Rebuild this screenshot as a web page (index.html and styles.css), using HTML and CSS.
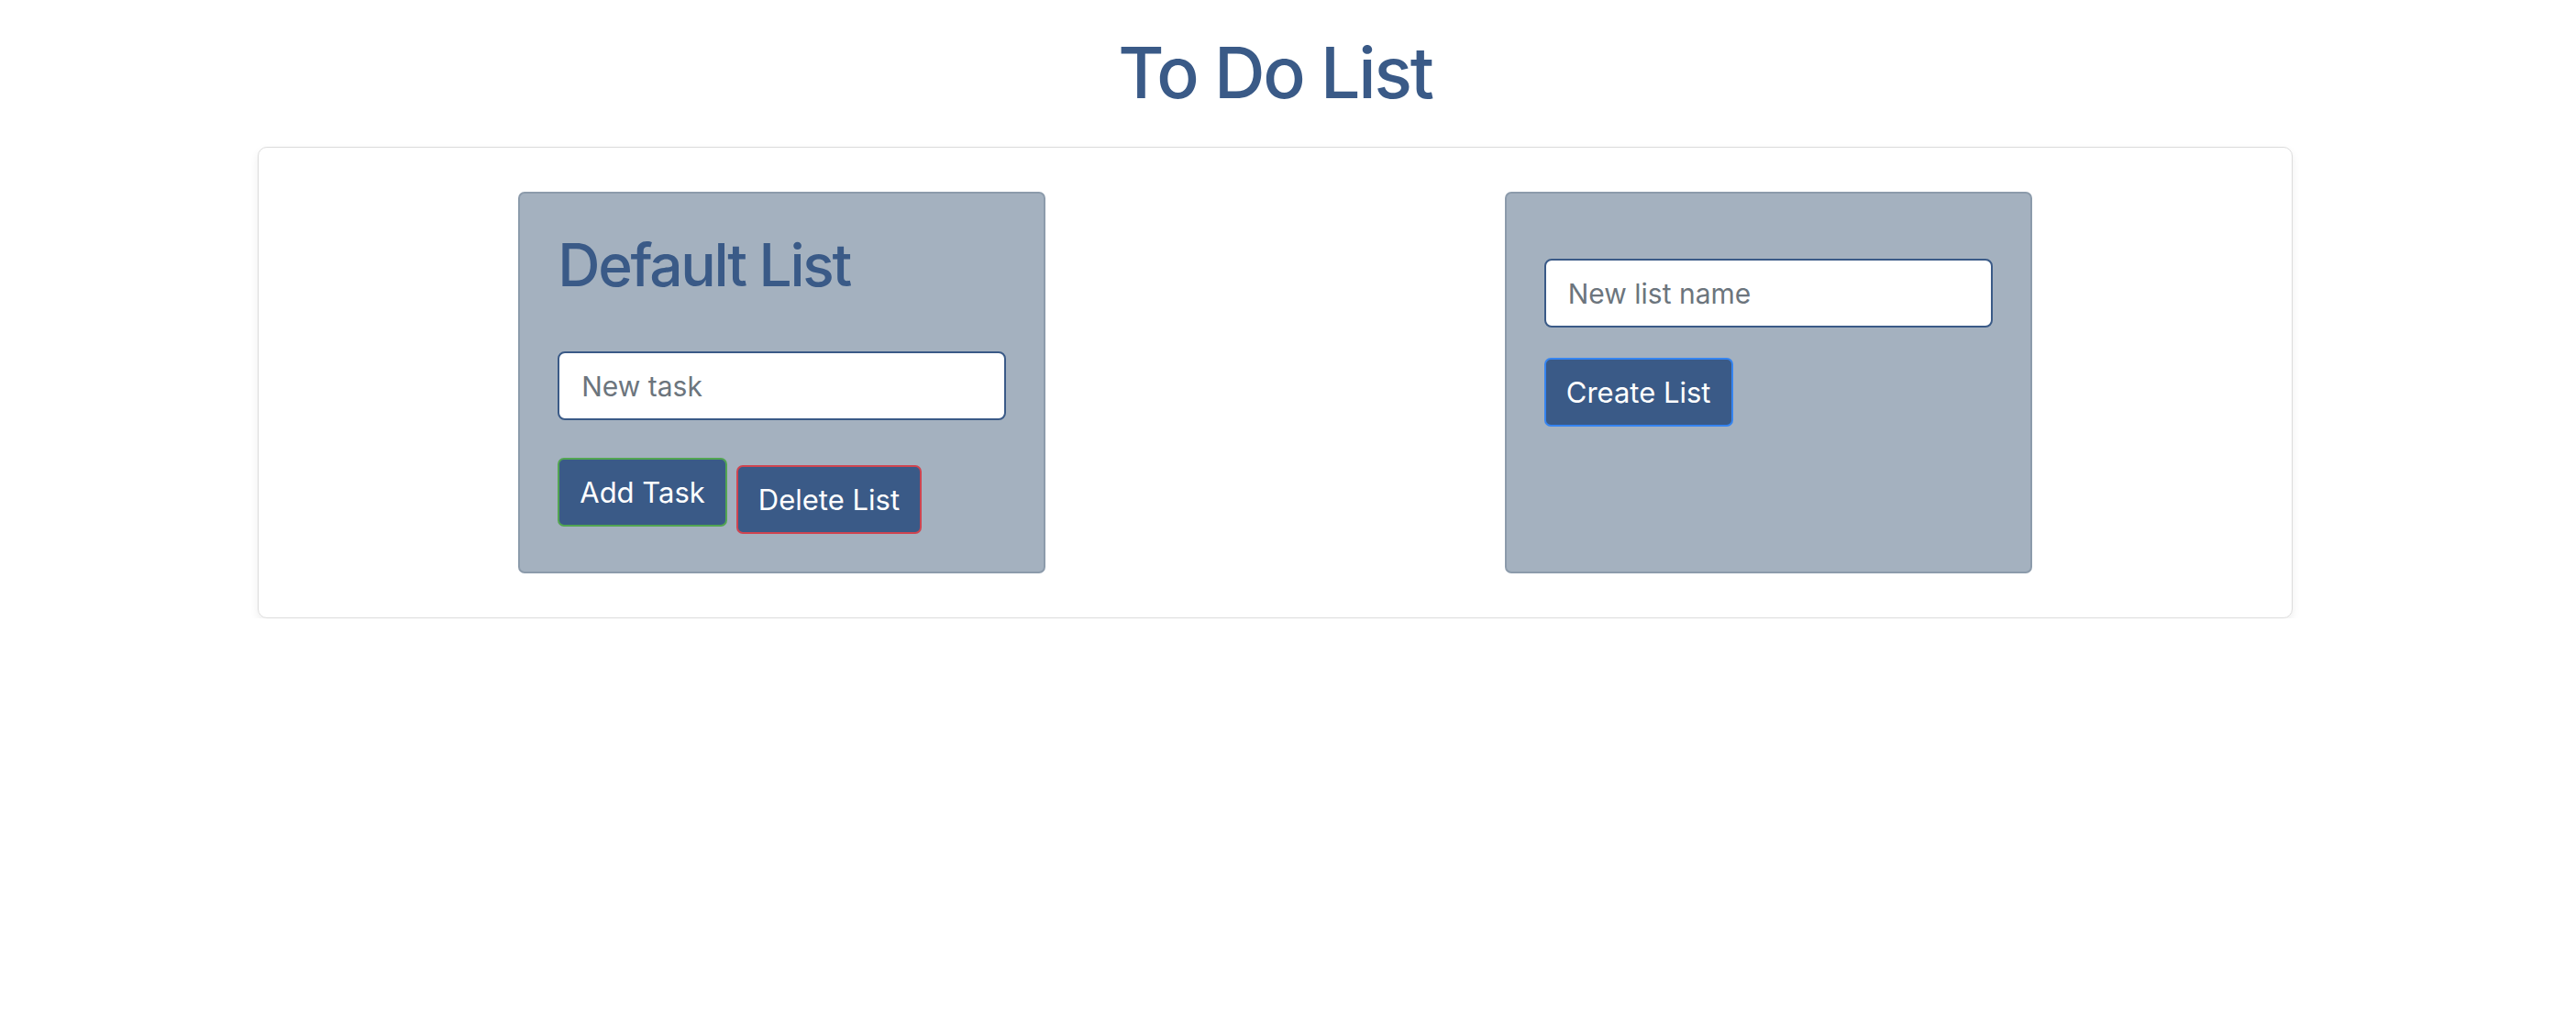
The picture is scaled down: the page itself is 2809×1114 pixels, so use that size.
FILE: index.html
```html
<!DOCTYPE html>
<html lang="en">
<head>
<meta charset="utf-8">
<title>To Do List</title>
<link rel="stylesheet" href="styles.css">
</head>
<body>
<div class="page">
  <h1 class="title">To Do List</h1>
  <div class="board">
    <div class="card">
      <h2 class="card-title">Default List</h2>
      <div class="field"><input class="input" type="text" placeholder="New task"></div>
      <div class="actions">
        <button class="btn btn-add">Add Task</button>
        <button class="btn btn-delete">Delete List</button>
      </div>
    </div>
    <div class="card">
      <div class="field field-new"><input class="input" type="text" placeholder="New list name"></div>
      <div class="actions actions-new">
        <button class="btn btn-create">Create List</button>
      </div>
    </div>
  </div>
</div>
</body>
</html>
```
FILE: styles.css
```css
html, body {
  margin: 0;
  padding: 0;
  background: #ffffff;
}
body {
  font-family: Inter, "Noto Sans", "Liberation Sans", sans-serif;
}
.page {
  width: 2781px;
}
.title {
  margin: 33px 0 35px;
  text-align: center;
  font-size: 77px;
  line-height: 1.2;
  font-weight: 500;
  color: #3a5a87;
  letter-spacing: -2.2px;
}
.board {
  margin: 0 281px;
  border: 1px solid #dcdcdc;
  border-radius: 10px;
  box-shadow: 0 4px 10px rgba(0, 0, 0, 0.07);
  padding: 48px 33px;
  display: flex;
  justify-content: space-around;
  align-items: stretch;
}
.card {
  width: 575px;
  box-sizing: border-box;
  background: #a4b1bf;
  border: 2px solid #8c9bab;
  border-radius: 7px;
  padding: 40px 41px 41px;
  display: flex;
  flex-direction: column;
}
.card-title {
  margin: 0 0 24px;
  font-size: 64px;
  line-height: 1.2;
  font-weight: 500;
  color: #3a5a87;
  letter-spacing: -2.3px;
}
.field {
  margin-top: 31px;
}
.input {
  display: block;
  box-sizing: border-box;
  width: 100%;
  height: 75px;
  margin: 0;
  padding: 0 24px;
  border: 2px solid #3a5a87;
  border-radius: 8px;
  background: #ffffff;
  font-family: inherit;
  font-size: 30px;
  color: #212529;
  outline: none;
}
.input::placeholder {
  color: #6c757d;
  opacity: 1;
}
.actions {
  display: flex;
  align-items: flex-start;
  gap: 10px;
  margin-top: 41px;
}
.actions-new {
  margin-top: 33px;
}
.btn {
  box-sizing: border-box;
  height: 75px;
  padding: 0 22px;
  border: 2px solid #3a5a87;
  border-radius: 7px;
  background: #3a5a87;
  color: #ffffff;
  font-family: inherit;
  font-size: 31px;
  font-weight: 400;
  cursor: pointer;
}
.btn-add {
  border-color: #52a552;
}
.btn-delete {
  margin-top: 8px;
  border-color: #cf4450;
}
.btn-create {
  border-color: #3584f0;
}
```
